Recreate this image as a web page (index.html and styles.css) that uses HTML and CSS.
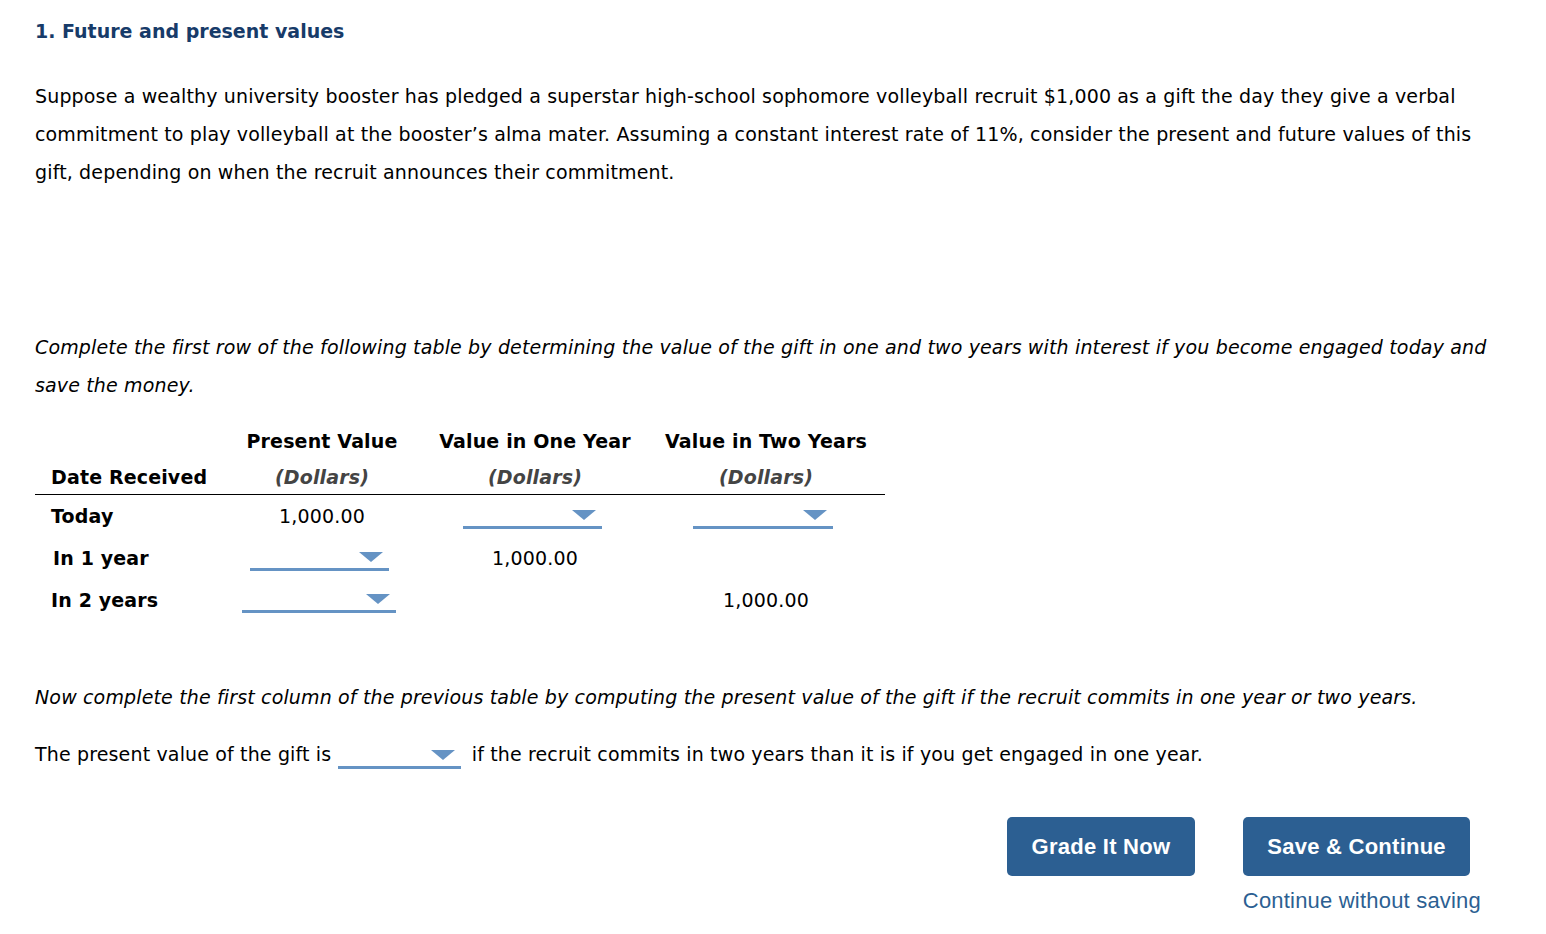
FILE: index.html
```html
<!DOCTYPE html>
<html>
<head>
<meta charset="utf-8">
<link rel="stylesheet" href="styles.css">
</head>
<body>
<div class="page">
  <h1 class="title">1. Future and present values</h1>
  <p class="intro">Suppose a wealthy university booster has pledged a superstar high-school sophomore volleyball recruit $1,000 as a gift the day they give a verbal commitment to play volleyball at the booster’s alma mater. Assuming a constant interest rate of 11%, consider the present and future values of this gift, depending on when the recruit announces their commitment.</p>
  <p class="instr">Complete the first row of the following table by determining the value of the gift in one and two years with interest if you become engaged today and save the money.</p>
  <table class="vt">
    <colgroup>
      <col class="c1"><col class="c2"><col class="c3"><col class="c4">
    </colgroup>
    <thead>
      <tr class="h1row">
        <th></th>
        <th>Present Value</th>
        <th>Value in One Year</th>
        <th class="last">Value in Two Years</th>
      </tr>
      <tr class="h2row">
        <th class="lbl">Date Received</th>
        <th class="unit">(Dollars)</th>
        <th class="unit">(Dollars)</th>
        <th class="unit last">(Dollars)</th>
      </tr>
    </thead>
    <tbody>
      <tr>
        <td class="lbl">Today</td>
        <td>1,000.00</td>
        <td><span class="dd w139"><span class="arrow"></span></span></td>
        <td class="last"><span class="dd w140"><span class="arrow"></span></span></td>
      </tr>
      <tr>
        <td class="lbl lbl2">In 1 year</td>
        <td><span class="dd w139"><span class="arrow"></span></span></td>
        <td>1,000.00</td>
        <td class="last"></td>
      </tr>
      <tr>
        <td class="lbl">In 2 years</td>
        <td><span class="dd w154"><span class="arrow"></span></span></td>
        <td></td>
        <td class="last">1,000.00</td>
      </tr>
    </tbody>
  </table>
  <p class="instr2">Now complete the first column of the previous table by computing the present value of the gift if the recruit commits in one year or two years.</p>
  <p class="sentence">The present value of the gift is <span class="dd w123 inl"><span class="arrow"></span></span> if the recruit commits in two years than it is if you get engaged in one year.</p>
  <div class="actions">
    <button class="btn">Grade It Now</button>
    <div class="savecol">
      <button class="btn">Save &amp; Continue</button>
      <a class="link" href="#">Continue without saving</a>
    </div>
  </div>
</div>
</body>
</html>
```

FILE: styles.css
```css
html, body {
  margin: 0;
  padding: 0;
  background: #fff;
}
body {
  font-family: "DejaVu Sans", Verdana, sans-serif;
  color: #000;
  letter-spacing: 0.15px;
}
.page {
  padding: 20px 0 0 35px;
  width: 1455px;
}
.title {
  margin: 0;
  font-size: 19px;
  line-height: 22px;
  font-weight: bold;
  letter-spacing: 0;
  color: #173b69;
}
.intro {
  margin: 35px 0 0 0;
  font-size: 19px;
  line-height: 38px;
}
.instr {
  margin: 137px 0 0 0;
  font-size: 19px;
  line-height: 38px;
  font-style: italic;
}
.vt {
  margin-top: 19px;
  border-collapse: collapse;
  width: 850px;
  font-size: 19px;
  table-layout: fixed;
}
.c1 { width: 197px; }
.c2 { width: 180px; }
.c3 { width: 246px; }
.c4 { width: 227px; }
.vt th {
  font-weight: bold;
  text-align: center;
  padding: 0;
}
.h1row th {
  height: 36px;
  vertical-align: middle;
}
.h2row th {
  height: 35px;
  padding-top: 0;
  vertical-align: middle;
  border-bottom: 1px solid #000;
}
.vt .last { padding-right: 11px; }
.vt th.lbl, .vt td.lbl {
  text-align: left;
  padding-left: 16px;
  font-weight: bold;
}
.vt td.lbl2 { padding-left: 18px; }
.unit {
  font-style: italic;
  color: #444;
}
.vt td {
  text-align: center;
  height: 42px;
  padding: 0;
  vertical-align: middle;
}
.dd {
  display: inline-block;
  position: relative;
  height: 20px;
  border-bottom: 3px solid #6593c4;
  vertical-align: -8px;
}
.vt .dd {
  margin-right: 6px;
}
.arrow {
  position: absolute;
  right: 6px;
  top: 4px;
  width: 0;
  height: 0;
  border-left: 12px solid transparent;
  border-right: 12px solid transparent;
  border-top: 10px solid #6593c4;
}
.w139 { width: 139px; }
.w140 { width: 140px; }
.w154 { width: 154px; }
.w123 { width: 123px; }
.dd.inl {
  margin: 0 5px 0 0;
}
.instr2 {
  margin: 57px 0 0 0;
  font-size: 19px;
  line-height: 38px;
  font-style: italic;
}
.sentence {
  margin: 19px 0 0 0;
  font-size: 19px;
  line-height: 38px;
}
.actions {
  display: flex;
  justify-content: flex-end;
  gap: 48px;
  margin-top: 44px;
  width: 1446px;
  letter-spacing: 0;
}
.btn {
  font-family: "Liberation Sans", Arial, sans-serif;
  font-weight: bold;
  font-size: 22px;
  letter-spacing: 0.25px;
  color: #fff;
  background: #2c5f92;
  border: none;
  border-radius: 5px;
  height: 59px;
  padding: 0 24.5px;
}
.savecol {
  display: flex;
  flex-direction: column;
  align-items: flex-start;
}
.link {
  font-family: "Liberation Sans", Arial, sans-serif;
  font-size: 22px;
  letter-spacing: 0.2px;
  color: #2c5f92;
  text-decoration: none;
  margin-top: 12px;
}
```
